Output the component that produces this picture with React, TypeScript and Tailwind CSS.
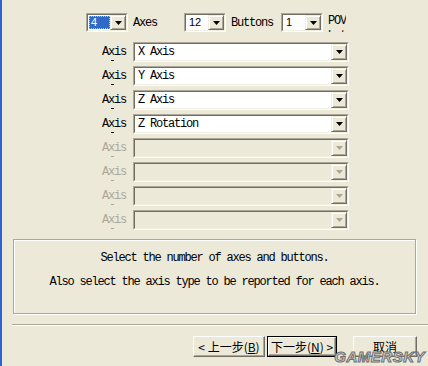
import clsx from 'clsx';
import { ReactNode } from 'react';

// SimSun-like look: 6px wide monospace cells
const mono = "font-['Liberation_Mono',monospace] text-[12px] tracking-[-1.2px] text-black";
const sans = "font-['Liberation_Sans',sans-serif] text-[11px] text-black";
const cjk = "font-['Noto_Sans_CJK_SC','Liberation_Sans',sans-serif] text-[12px] text-black";

function Arrow({ disabled }: { disabled?: boolean }) {
  return (
    <div className="flex h-full w-[16px] shrink-0 items-center justify-center border border-t-[#F1EFE2] border-l-[#F1EFE2] border-r-[#716F64] border-b-[#716F64] bg-[#ECE9D8] shadow-[inset_1px_1px_0_#fff,inset_-1px_-1px_0_#ACA899]">
      <svg width="7" height="4" viewBox="0 0 7 4">
        <path d="M0 0h7L3.5 4z" fill={disabled ? '#ACA899' : '#000'} />
      </svg>
    </div>
  );
}

function Combo({
  className,
  children,
  disabled,
}: {
  className?: string;
  children?: ReactNode;
  disabled?: boolean;
}) {
  return (
    <div
      className={clsx(
        'flex border border-t-[#ACA899] border-l-[#ACA899] border-r-white border-b-white',
        className
      )}
    >
      <div
        className={clsx(
          'flex min-w-0 flex-1 border border-t-[#716F64] border-l-[#716F64] border-r-[#F1EFE2] border-b-[#F1EFE2]',
          disabled ? 'bg-[#ECE9D8]' : 'bg-white'
        )}
      >
        <div className="flex min-w-0 flex-1 items-center pl-[1px]">{children}</div>
        <Arrow disabled={disabled} />
      </div>
    </div>
  );
}

function Btn({
  className,
  children,
  def,
}: {
  className?: string;
  children: ReactNode;
  def?: boolean;
}) {
  return (
    <div className={clsx('flex h-[21px] shrink-0', def && 'border border-black', className)}>
      <div
        className={clsx(
          'flex flex-1 items-center justify-center whitespace-nowrap border border-t-white border-l-white border-r-[#716F64] border-b-[#716F64] bg-[#ECE9D8] shadow-[inset_-1px_-1px_0_#ACA899]',
          cjk
        )}
      >
        {children}
      </div>
    </div>
  );
}

const axes = ['X Axis', 'Y Axis', 'Z Axis', 'Z Rotation', '', '', '', ''];

export default function App() {
  return (
    <div className="relative flex h-[366px] w-[428px] overflow-hidden bg-[#ECE9D8]">
      <div className="w-[2px] shrink-0 bg-[#2E63D6]" />
      <div className="flex flex-1 flex-col">
        {/* counts row */}
        <div className="mt-[13px] flex h-[19px] pl-[84px]">
          <Combo className="w-[42px]">
            <span
              className={clsx(
                'flex h-[13px] w-[23px] items-center border border-dotted border-[#A9C0EE] bg-[#316AC5] pl-[1px] !text-white',
                sans
              )}
            >
              4
            </span>
          </Combo>
          <div className={clsx('ml-[5px] flex w-[51px] items-center', mono)}>Axes</div>
          <Combo className="w-[42px]">
            <span className={clsx('pl-[2px]', sans)}>12</span>
          </Combo>
          <div className={clsx('ml-[5px] flex w-[50px] items-center', mono)}>Buttons</div>
          <Combo className="w-[42px]">
            <span className={clsx('pl-[2px]', sans)}>1</span>
          </Combo>
          <div className={clsx('ml-[5px] h-[19px] overflow-hidden pt-[1px] leading-[15px]', mono)}>
            POV
            <br />
            hat
          </div>
        </div>

        {/* axis rows */}
        <div className="mt-[10px] flex flex-col gap-[4px] pl-[100px]">
          {axes.map((a, i) => {
            const disabled = a === '';
            return (
              <div key={i} className="flex h-[20px] items-center">
                <div
                  className={clsx(
                    'relative w-[31px]',
                    mono,
                    disabled && '!text-[#ACA899]'
                  )}
                >
                  Axis
                  <span
                    className={clsx(
                      'absolute left-[9px] top-[17px] h-[1px] w-[3px]',
                      disabled ? 'bg-[#ACA899]' : 'bg-black'
                    )}
                  />
                </div>
                <Combo className="h-[20px] w-[216px]" disabled={disabled}>
                  <span className={clsx('pl-[2px]', mono)}>{a}</span>
                </Combo>
              </div>
            );
          })}
        </div>

        {/* help group box */}
        <div className="ml-[11px] mt-[9px] h-[75px] w-[403px] border border-[#ACA899] pt-[6px] text-center shadow-[inset_1px_1px_0_#fff,1px_1px_0_#fff]">
          <p className={clsx('leading-[24px]', mono)}>Select the number of axes and buttons.</p>
          <p className={clsx('leading-[24px]', mono)}>
            Also select the axis type to be reported for each axis.
          </p>
        </div>

        {/* separator */}
        <div className="ml-[10px] mt-[10px] h-[2px] border-t border-b border-t-[#ACA899] border-b-white" />

        {/* wizard buttons */}
        <div className="mt-[10px] flex">
          <Btn className="ml-[191px] w-[72px]">
            &lt; 上一步(<span className="underline">B</span>)
          </Btn>
          <Btn className="ml-[2px] w-[70px]" def>
            下一步(<span className="underline">N</span>) &gt;
          </Btn>
          <Btn className="ml-[16px] w-[64px]">取消</Btn>
        </div>
      </div>

      {/* watermark */}
      <div className="absolute bottom-0 right-[3px] font-['Liberation_Sans',sans-serif] text-[15px] font-bold italic leading-[18px] tracking-[0.5px] text-[#d8d8d8] [-webkit-text-stroke:1px_#6e6e6e]">
        GAMERSKY
      </div>
    </div>
  );
}
